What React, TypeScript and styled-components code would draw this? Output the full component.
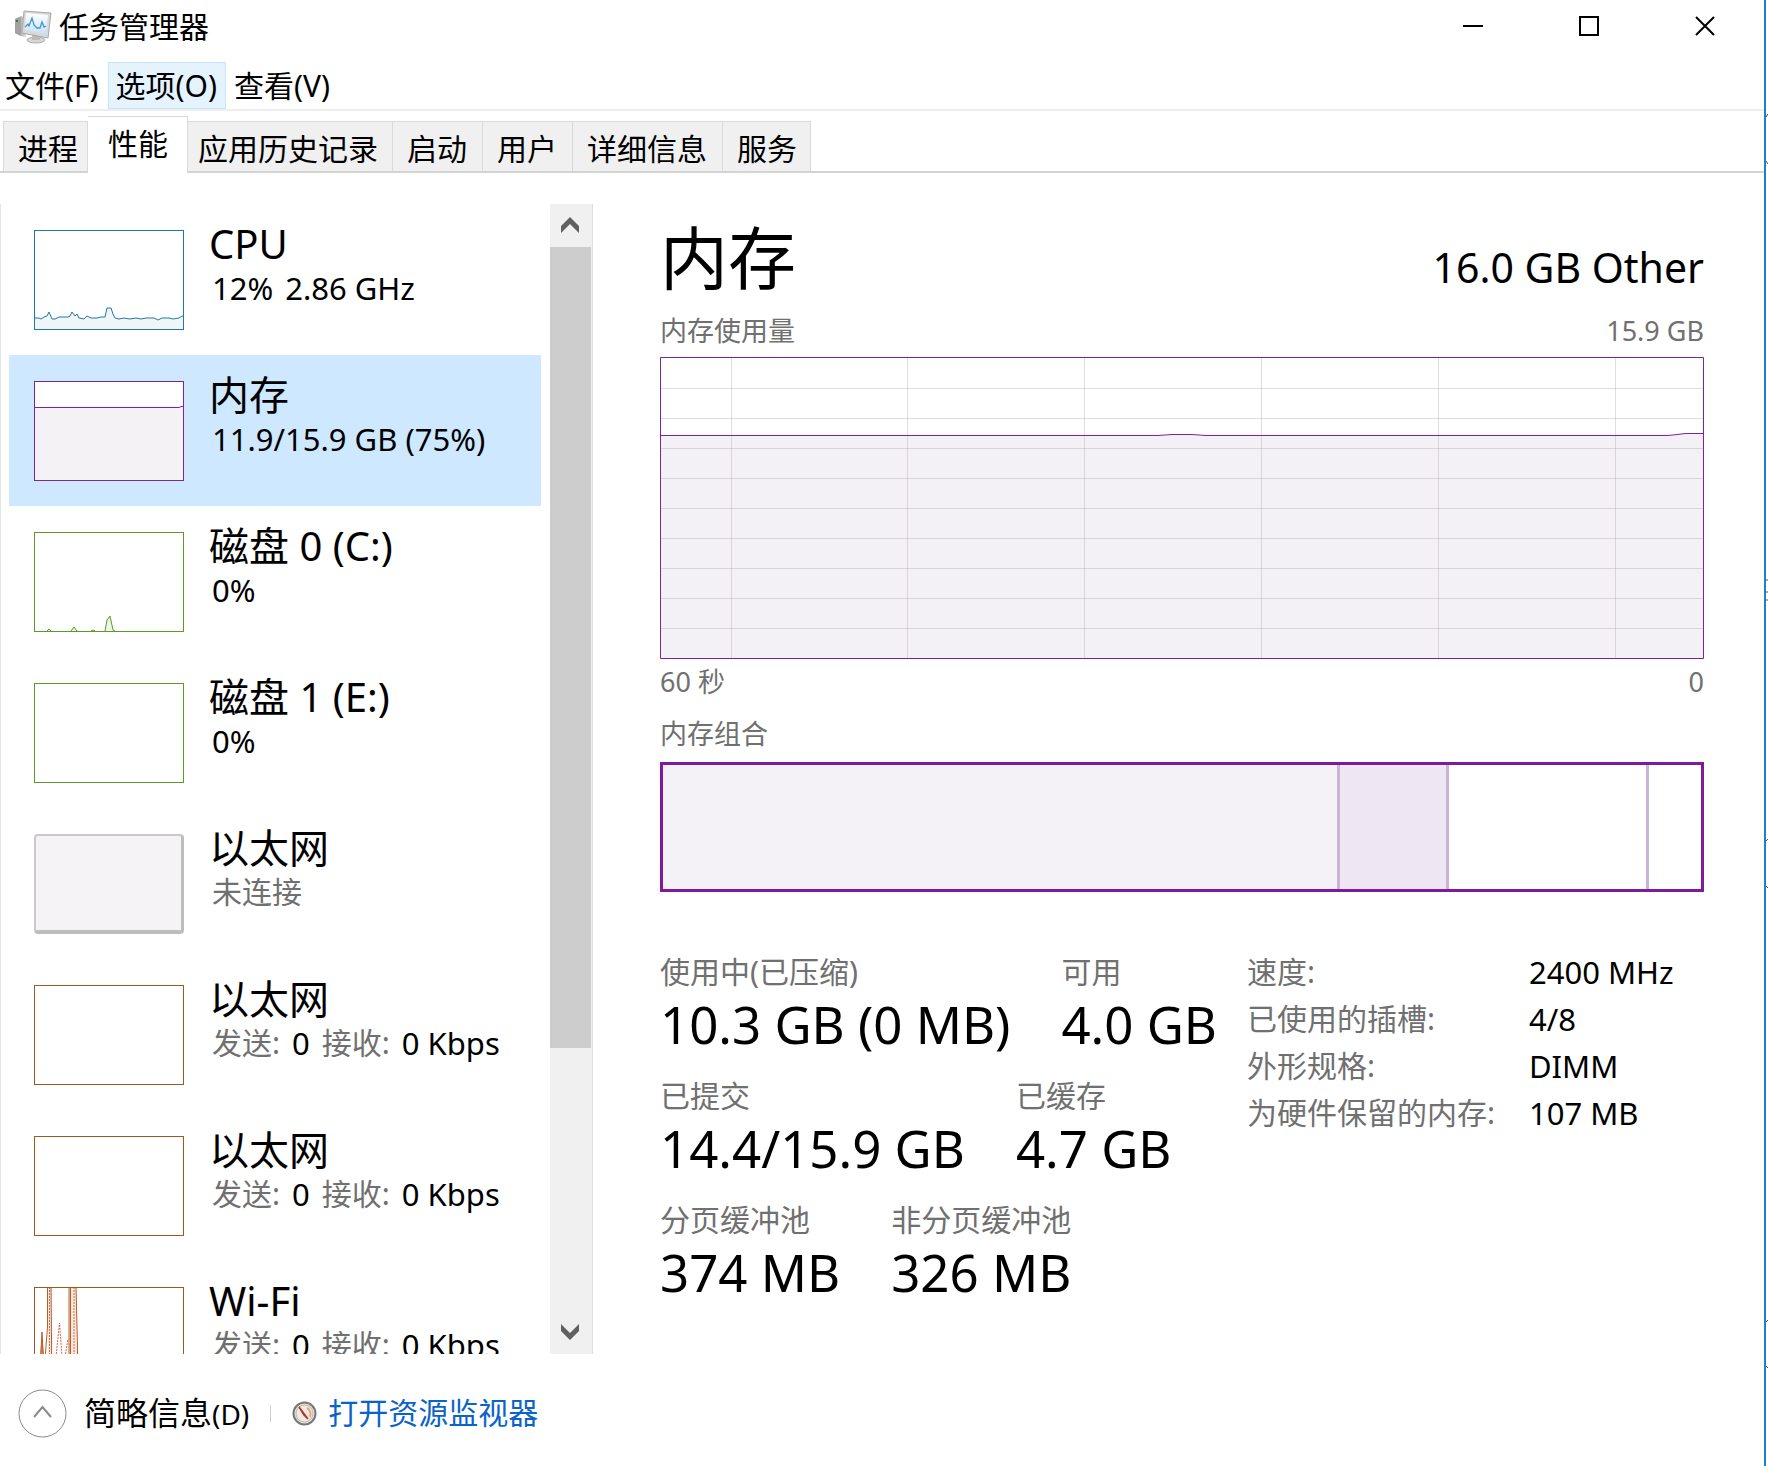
import React, { useState } from "react";
import styled, { createGlobalStyle, css } from "styled-components";

const GlobalStyle = createGlobalStyle`
  *, *::before, *::after { box-sizing: border-box; }
  body {
    margin: 0;
    background: #fff;
    color: #000;
    font-family: "Noto Sans", "Noto Sans CJK SC", sans-serif;
    font-size: 30px;
    line-height: 40px;
  }
  button { font: inherit; color: inherit; border: 0; margin: 0; padding: 0; background: none; }
  dl, dd, dt, ul, h1, h2, p { margin: 0; padding: 0; font-weight: 400; }
`;

const Desktop = styled.div`
  display: flex;
  height: 100vh;
`;

const Window = styled.div`
  flex: 1;
  min-width: 0;
  display: flex;
  flex-direction: column;
  border-right: 2px solid #1f80cc;
`;

const Behind = styled.svg`
  width: 2px;
  height: 100%;
  flex: none;
`;

const TitleBar = styled.header`
  display: flex;
  align-items: flex-start;
  height: 62px;
  padding-right: 1px;
`;

const AppTitle = styled.div`
  flex: 1;
  display: flex;
  align-items: center;
  gap: 7px;
  padding: 7px 0 0 14px;
`;

const CaptionButton = styled.button`
  width: 116px;
  height: 52px;
  display: flex;
  align-items: center;
  justify-content: center;
`;

const MenuBar = styled.nav`
  display: flex;
  height: 49px;
  border-bottom: 2px solid #eeeeee;
`;

const MenuItem = styled.button<{ $hot?: boolean }>`
  height: 47px;
  padding: 0 8px 0 7px;
  border: 1px solid transparent;
  white-space: nowrap;
  &:first-child { padding-left: 4px; }
  ${(p) => p.$hot && css`background: #e5f3ff; border-color: #c6e4fb;`}
`;

const TabStrip = styled.div`
  display: flex;
  align-items: flex-end;
  height: 62px;
  padding-left: 3px;
  border-bottom: 2px solid #d3d3d3;
`;

const Tab = styled.button<{ $active: boolean }>`
  height: 50px;
  padding: 5px 15px 0 14px;
  border-top: 1px solid #d9d9d9;
  border-right: 1px solid #d9d9d9;
  background: #f0f0f0;
  white-space: nowrap;
  &:first-child { border-left: 1px solid #d9d9d9; padding: 5px 9px 0 14px; }
  &:nth-child(3) { padding: 5px 14px 0 10px; }
  &:last-child { padding: 5px 13px 0 14px; }
  ${(p) =>
    p.$active &&
    css`
      height: 57px;
      margin-bottom: -2px;
      padding: 0 19px 2px 20px;
      background: #fff;
    `}
`;

const Body = styled.div`
  flex: 1;
  min-height: 0;
  display: flex;
  padding-top: 31px;
`;

const Sidebar = styled.aside`
  flex: none;
  display: flex;
  border-left: 1px solid #e4e4e4;
`;

const DeviceList = styled.ul`
  width: 540px;
  padding: 0 0 0 8px;
  overflow: hidden;
  list-style: none;
`;

const Device = styled.button<{ $selected: boolean }>`
  display: flex;
  gap: 25px;
  width: 100%;
  height: 151px;
  padding: 26px 0 0 25px;
  text-align: left;
  background: ${(p) => (p.$selected ? "#cde8ff" : "transparent")};
`;

const Thumb = styled.svg`
  flex: none;
  width: 150px;
  height: 100px;
`;

const IdleThumb = styled.span`
  flex: none;
  width: 150px;
  height: 100px;
  border: 2px solid #c9c9c9;
  border-right: 3px solid #bdbdbd;
  border-bottom: 4px solid #bdbdbd;
  border-radius: 4px;
  background: #f5f3f5;
`;

const DeviceText = styled.span`
  display: flex;
  flex-direction: column;
  white-space: nowrap;
`;

const DeviceName = styled.span`
  font-size: 40px;
  line-height: 48px;
  margin-top: -10px;
`;

const DeviceInfo = styled.span`
  display: flex;
  gap: 12px;
  padding-left: 3px;
  font-size: 31px;
  line-height: 40px;
`;

const Muted = styled.span`
  font-size: 30px;
  color: #707070;
`;

const ScrollBar = styled.div`
  display: flex;
  flex-direction: column;
  width: 43px;
  margin-left: 9px;
  background: linear-gradient(#f0f0f0, #f0f0f0) left / 42px 100% no-repeat;
  border-right: 1px solid #dedede;
`;

const ScrollButton = styled.button`
  height: 43px;
  width: 40px;
  padding-bottom: 2px;
  display: flex;
  align-items: center;
  justify-content: center;
`;

const ScrollTrack = styled.div`
  flex: 1;
  display: flex;
  flex-direction: column;
  &::after { content: ""; flex: 263; }
`;

const ScrollThumb = styled.div`
  flex: 801;
  width: 41px;
  background: #cdcdcd;
`;

const Detail = styled.main`
  flex: 1;
  min-width: 0;
  padding: 4px 60px 0 67px;
`;

const DetailHead = styled.div`
  display: flex;
  justify-content: space-between;
  align-items: center;
  height: 100px;
`;

const DetailTitle = styled.h1`
  font-size: 68px;
  line-height: 100px;
`;

const Capacity = styled.p`
  font-size: 41px;
  line-height: 48px;
  padding-top: 18px;
`;

const CaptionRow = styled.div`
  display: flex;
  justify-content: space-between;
  height: 48px;
  font-size: 27px;
  line-height: 46px;
  color: #707070;
`;

const SectionLabel = styled.h2`
  height: 55px;
  font-size: 27px;
  line-height: 54px;
  color: #707070;
`;

const UsageChart = styled.svg`
  display: block;
  width: 100%;
  height: 302px;
  margin-top: 1px;
`;

const Composition = styled.div`
  display: flex;
  height: 130px;
  border: 3px solid #7f1a9c;
`;

const Segment = styled.div<{ $share: number; $fill: string }>`
  flex: ${(p) => p.$share} 0 0px;
  background: ${(p) => p.$fill};
  &:not(:last-child) { border-right: 3px solid #cbb3d6; }
`;

const Figures = styled.div`
  display: flex;
  align-items: flex-start;
  gap: 30px;
  padding-top: 56px;
`;

const StatRows = styled.div`
  display: flex;
  flex-direction: column;
  padding-top: 4px;
`;

const StatRow = styled.dl`
  display: flex;
  gap: 51px;
  height: 124px;
`;

const StatLabel = styled.dt`
  line-height: 40px;
  color: #707070;
  white-space: nowrap;
`;

const StatValue = styled.dd`
  font-size: 51px;
  line-height: 64px;
  white-space: nowrap;
`;

const Specs = styled.table`
  border-collapse: collapse;
  white-space: nowrap;
`;

const SpecName = styled.th`
  width: 282px;
  height: 47px;
  padding: 0;
  font-weight: 400;
  text-align: left;
  color: #707070;
`;

const SpecValue = styled.td`
  padding: 0;
  font-size: 31px;
`;

const Footer = styled.footer`
  display: flex;
  align-items: center;
  height: 112px;
  padding: 6px 0 0 18px;
`;

const FewerButton = styled.button`
  display: flex;
  align-items: center;
  gap: 17px;
  font-size: 32px;
`;

const AccessKey = styled.span`
  font-size: 28px;
`;

const Divider = styled.span`
  width: 1px;
  height: 17px;
  margin: 0 21px;
  background: #cfcfcf;
`;

const MonitorLink = styled.a`
  display: flex;
  align-items: center;
  gap: 11px;
  color: #0a64c8;
  text-decoration: none;
`;

const AppIcon = () => (
  <svg width="38" height="34" viewBox="0 0 38 34" aria-hidden="true">
    <defs>
      <linearGradient id="case" x1="0" x2="1" y1="0" y2="0">
        <stop offset="0" stopColor="#8d8d8d" />
        <stop offset="1" stopColor="#dcdcdc" />
      </linearGradient>
      <linearGradient id="screen" x1="0" x2="0" y1="0" y2="1">
        <stop offset="0" stopColor="#fff" />
        <stop offset="1" stopColor="#c5e3f8" />
      </linearGradient>
    </defs>
    <path d="M1 9 L7 6 L12 8 V27 L7 26 L1 23 Z" fill="url(#case)" />
    <path d="M1 9 L7 8 V26 L1 23 Z" fill="#a2a2a2" />
    <rect x="2" y="10" width="2" height="2" fill="#3c7a34" />
    <ellipse cx="22" cy="30" rx="9" ry="3" fill="#d6d6d6" stroke="#adadad" />
    <path d="M18 24 L26 26 V30 H18 Z" fill="#bcbcbc" />
    <path d="M10 1 L37 3 L34 28 L8 23 Z" fill="#d9d9d9" stroke="#a8a8a8" />
    <path d="M12 3 L34 5 L32 24 L11 20 Z" fill="url(#screen)" />
    <path d="M11 17 L14 14 L15 16 L18 8 L20 15 L23 18 L26 18 L28 12 L30 17 L32 16" fill="none" stroke="#4795cf" strokeWidth="1.3" />
  </svg>
);

const GaugeIcon = () => (
  <svg width="25" height="25" viewBox="0 0 25 25" aria-hidden="true">
    <circle cx="12.500" cy="12.500" r="11" fill="#e9e5df" stroke="#777" strokeWidth="2" />
    <circle cx="12.500" cy="12.500" r="8.500" fill="#f1eae1" stroke="#b9b5af" />
    <path d="M15 7 A7 7 0 0 1 18 16" fill="none" stroke="#e5a780" strokeWidth="2" />
    <path d="M7 6 L16 18 L12 14 Z" fill="#c22b20" stroke="#b0302a" strokeWidth="1.500" />
  </svg>
);

type DeviceKind = "cpu" | "memory" | "disk" | "disk-idle" | "idle" | "net" | "wifi";

const frameColor: Record<DeviceKind, string> = {
  cpu: "#1f78a9",
  memory: "#7d22a0",
  disk: "#5b9a28",
  "disk-idle": "#5b9a28",
  idle: "#bdbdbd",
  net: "#9a5a22",
  wifi: "#9a5a22",
};

const cpuLine =
  "0,88 5,88 7,89 10,87 13,86 15,82 18,89 21,89 25,87 34,87 36,86 38,82 41,86 43,84 45,88 50,89 53,86 57,88 63,88 67,87 71,87 73,78 77,78 79,84 81,88 85,89 90,88 96,89 102,88 107,89 112,88 120,88 124,90 128,88 135,88 139,89 145,88 148,86 150,86";

const MiniChart = ({ kind }: { kind: DeviceKind }) => {
  if (kind === "idle") return <IdleThumb />;
  const color = frameColor[kind];
  return (
    <Thumb viewBox="0 0 150 100" aria-hidden="true">
      <rect width="150" height="100" fill="#fff" />
      {kind === "cpu" && (
        <>
          <polygon points={`0,100 ${cpuLine} 150,100`} fill="#f0f5f8" />
          <polyline points={cpuLine} fill="none" stroke={color} />
        </>
      )}
      {kind === "memory" && (
        <>
          <rect y="26" width="150" height="74" fill="#f4f2f4" />
          <polyline points="0,26.500 145,26.500 147,25.500 150,25.500" fill="none" stroke={color} />
        </>
      )}
      {kind === "disk" && (
        <path d="M13 99 L15 97 L17 99 M37 99 L40 95 L43 99 M57 99 L59 98 L61 99 M71 99 L73 88 L76 84 L79 98 L81 99" fill="#eef6e8" stroke={color} />
      )}
      {kind === "wifi" && (
        <>
          <path d="M14 100 V0 H18 V100 Z M35 100 V0 H43 V100 Z" fill="#fbe9df" />
          <path d="M6 72 L8 45 L10 72 Z" fill="#cf8a62" />
          <path d="M5 100 L8 45 L11 100 M11 72 L13.500 40 V0 M17 0 L18 100 M35 100 V0 M36.500 100 V0 M42 0 L43.500 60 V100" fill="none" stroke="#b5602c" />
          <path d="M15.500 0 V100 M22 70 L25.500 36 L28 70 M31 70 L34 52 M40 0 V100" fill="none" stroke="#cf6a4c" strokeDasharray="2 1" />
        </>
      )}
      <rect x="0.500" y="0.500" width="149" height="99" fill="none" stroke={color} />
    </Thumb>
  );
};

const NetInfo = () => (
  <>
    <Muted>发送:</Muted>
    <span>0</span>
    <Muted>接收:</Muted>
    <span>0 Kbps</span>
  </>
);

const CpuInfo = () => (
  <>
    <span>12%</span>
    <span>2.86 GHz</span>
  </>
);

const devices: { kind: DeviceKind; name: string; info: React.ReactNode }[] = [
  { kind: "cpu", name: "CPU", info: <CpuInfo /> },
  { kind: "memory", name: "内存", info: "11.9/15.9 GB (75%)" },
  { kind: "disk", name: "磁盘 0 (C:)", info: "0%" },
  { kind: "disk-idle", name: "磁盘 1 (E:)", info: "0%" },
  { kind: "idle", name: "以太网", info: <Muted>未连接</Muted> },
  { kind: "net", name: "以太网", info: <NetInfo /> },
  { kind: "net", name: "以太网", info: <NetInfo /> },
  { kind: "wifi", name: "Wi-Fi", info: <NetInfo /> },
];

const tabs = ["进程", "性能", "应用历史记录", "启动", "用户", "详细信息", "服务"];

const stats = [
  [["使用中(已压缩)", "10.3 GB (0 MB)"], ["可用", "4.0 GB"]],
  [["已提交", "14.4/15.9 GB"], ["已缓存", "4.7 GB"]],
  [["分页缓冲池", "374 MB"], ["非分页缓冲池", "326 MB"]],
];

const specs = [
  ["速度:", "2400 MHz"],
  ["已使用的插槽:", "4/8"],
  ["外形规格:", "DIMM"],
  ["为硬件保留的内存:", "107 MB"],
];

const usageLine = "0,78.500 498,78.500 512,77.500 532,77.500 546,78.500 1008,78.500 1026,76.500 1044,76.500";

const MemoryUsage = () => (
  <UsageChart viewBox="0 0 1044 302" preserveAspectRatio="none" role="img" aria-label="内存使用量">
    <polygon points={`0,302 ${usageLine} 1044,302`} fill="#f4f1f6" />
    {[31.5, 61.5, 91.5, 121.5, 151.5, 181.5, 211.5, 241.5, 271.5].map((y) => (
      <path key={y} d={`M0 ${y} H1044`} stroke="#a59cae" strokeOpacity="0.35" vectorEffect="non-scaling-stroke" />
    ))}
    {[71.5, 247.5, 424.5, 601.5, 778.5, 955.5].map((x) => (
      <path key={x} d={`M${x} 0 V302`} stroke="#a59cae" strokeOpacity="0.35" vectorEffect="non-scaling-stroke" />
    ))}
    <polyline points={usageLine} fill="none" stroke="#7d22a0" vectorEffect="non-scaling-stroke" />
    <rect x="0.500" y="0.500" width="1043" height="301" fill="none" stroke="#7d22a0" vectorEffect="non-scaling-stroke" />
  </UsageChart>
);

export default function App() {
  const [tab, setTab] = useState(1);
  const [device, setDevice] = useState(1);

  return (
    <Desktop>
      <GlobalStyle />
      <Window>
        <TitleBar>
          <AppTitle>
            <AppIcon />
            <span>任务管理器</span>
          </AppTitle>
          <CaptionButton aria-label="最小化">
            <svg width="20" height="20"><path d="M0 10 H20" stroke="#000" strokeWidth="2" /></svg>
          </CaptionButton>
          <CaptionButton aria-label="最大化">
            <svg width="20" height="20"><rect x="1" y="1" width="18" height="18" fill="none" stroke="#000" strokeWidth="2" /></svg>
          </CaptionButton>
          <CaptionButton aria-label="关闭">
            <svg width="20" height="20"><path d="M1 1 L19 19 M19 1 L1 19" stroke="#000" strokeWidth="2" /></svg>
          </CaptionButton>
        </TitleBar>

        <MenuBar>
          <MenuItem>文件(F)</MenuItem>
          <MenuItem $hot>选项(O)</MenuItem>
          <MenuItem>查看(V)</MenuItem>
        </MenuBar>

        <TabStrip role="tablist">
          {tabs.map((label, i) => (
            <Tab key={label} role="tab" aria-selected={i === tab} $active={i === tab} onClick={() => setTab(i)}>
              {label}
            </Tab>
          ))}
        </TabStrip>

        <Body>
          <Sidebar>
            <DeviceList>
              {devices.map((d, i) => (
                <li key={i}>
                  <Device $selected={i === device} onClick={() => setDevice(i)}>
                    <MiniChart kind={d.kind} />
                    <DeviceText>
                      <DeviceName>{d.name}</DeviceName>
                      <DeviceInfo>{d.info}</DeviceInfo>
                    </DeviceText>
                  </Device>
                </li>
              ))}
            </DeviceList>
            <ScrollBar>
              <ScrollButton aria-label="向上滚动">
                <svg width="18" height="16"><path d="M0 9 L9 0 L18 9 V16 L9 7 L0 16 Z" fill="#606060" /></svg>
              </ScrollButton>
              <ScrollTrack>
                <ScrollThumb />
              </ScrollTrack>
              <ScrollButton aria-label="向下滚动">
                <svg width="18" height="16"><path d="M0 7 L9 16 L18 7 V0 L9 9 L0 0 Z" fill="#606060" /></svg>
              </ScrollButton>
            </ScrollBar>
          </Sidebar>

          <Detail>
            <DetailHead>
              <DetailTitle>内存</DetailTitle>
              <Capacity>16.0 GB Other</Capacity>
            </DetailHead>
            <CaptionRow>
              <span>内存使用量</span>
              <span>15.9 GB</span>
            </CaptionRow>
            <MemoryUsage />
            <CaptionRow>
              <span>60 秒</span>
              <span>0</span>
            </CaptionRow>
            <SectionLabel>内存组合</SectionLabel>
            <Composition>
              <Segment $share={677} $fill="#f4f2f6" />
              <Segment $share={107} $fill="#eee6f3" />
              <Segment $share={198} $fill="#ffffff" />
              <Segment $share={52} $fill="#ffffff" />
            </Composition>
            <Figures>
              <StatRows>
                {stats.map((row, i) => (
                  <StatRow key={i}>
                    {row.map(([label, value]) => (
                      <div key={label}>
                        <StatLabel>{label}</StatLabel>
                        <StatValue>{value}</StatValue>
                      </div>
                    ))}
                  </StatRow>
                ))}
              </StatRows>
              <Specs>
                <tbody>
                  {specs.map(([name, value]) => (
                    <tr key={name}>
                      <SpecName scope="row">{name}</SpecName>
                      <SpecValue>{value}</SpecValue>
                    </tr>
                  ))}
                </tbody>
              </Specs>
            </Figures>
          </Detail>
        </Body>

        <Footer>
          <FewerButton>
            <svg width="49" height="49" aria-hidden="true">
              <circle cx="24.500" cy="24.500" r="23.500" fill="none" stroke="#8a8a8a" />
              <path d="M16 28 L24.500 18 L33 28" fill="none" stroke="#8a8a8a" strokeWidth="2" />
            </svg>
            <span>简略信息<AccessKey>(D)</AccessKey></span>
          </FewerButton>
          <Divider />
          <MonitorLink href="#resmon">
            <GaugeIcon />
            打开资源监视器
          </MonitorLink>
        </Footer>
      </Window>
      <Behind viewBox="0 0 2 1466" preserveAspectRatio="none" aria-hidden="true">
        <path d="M0 117 L2 114 M0 161 L2 164 M0 580 H2 M0 592 H2 M0 600 H2 M0 841 L2 839 M0 886 L2 888 M0 1322 L2 1320 M0 1366 L2 1368" stroke="#4a4f58" />
      </Behind>
    </Desktop>
  );
}
